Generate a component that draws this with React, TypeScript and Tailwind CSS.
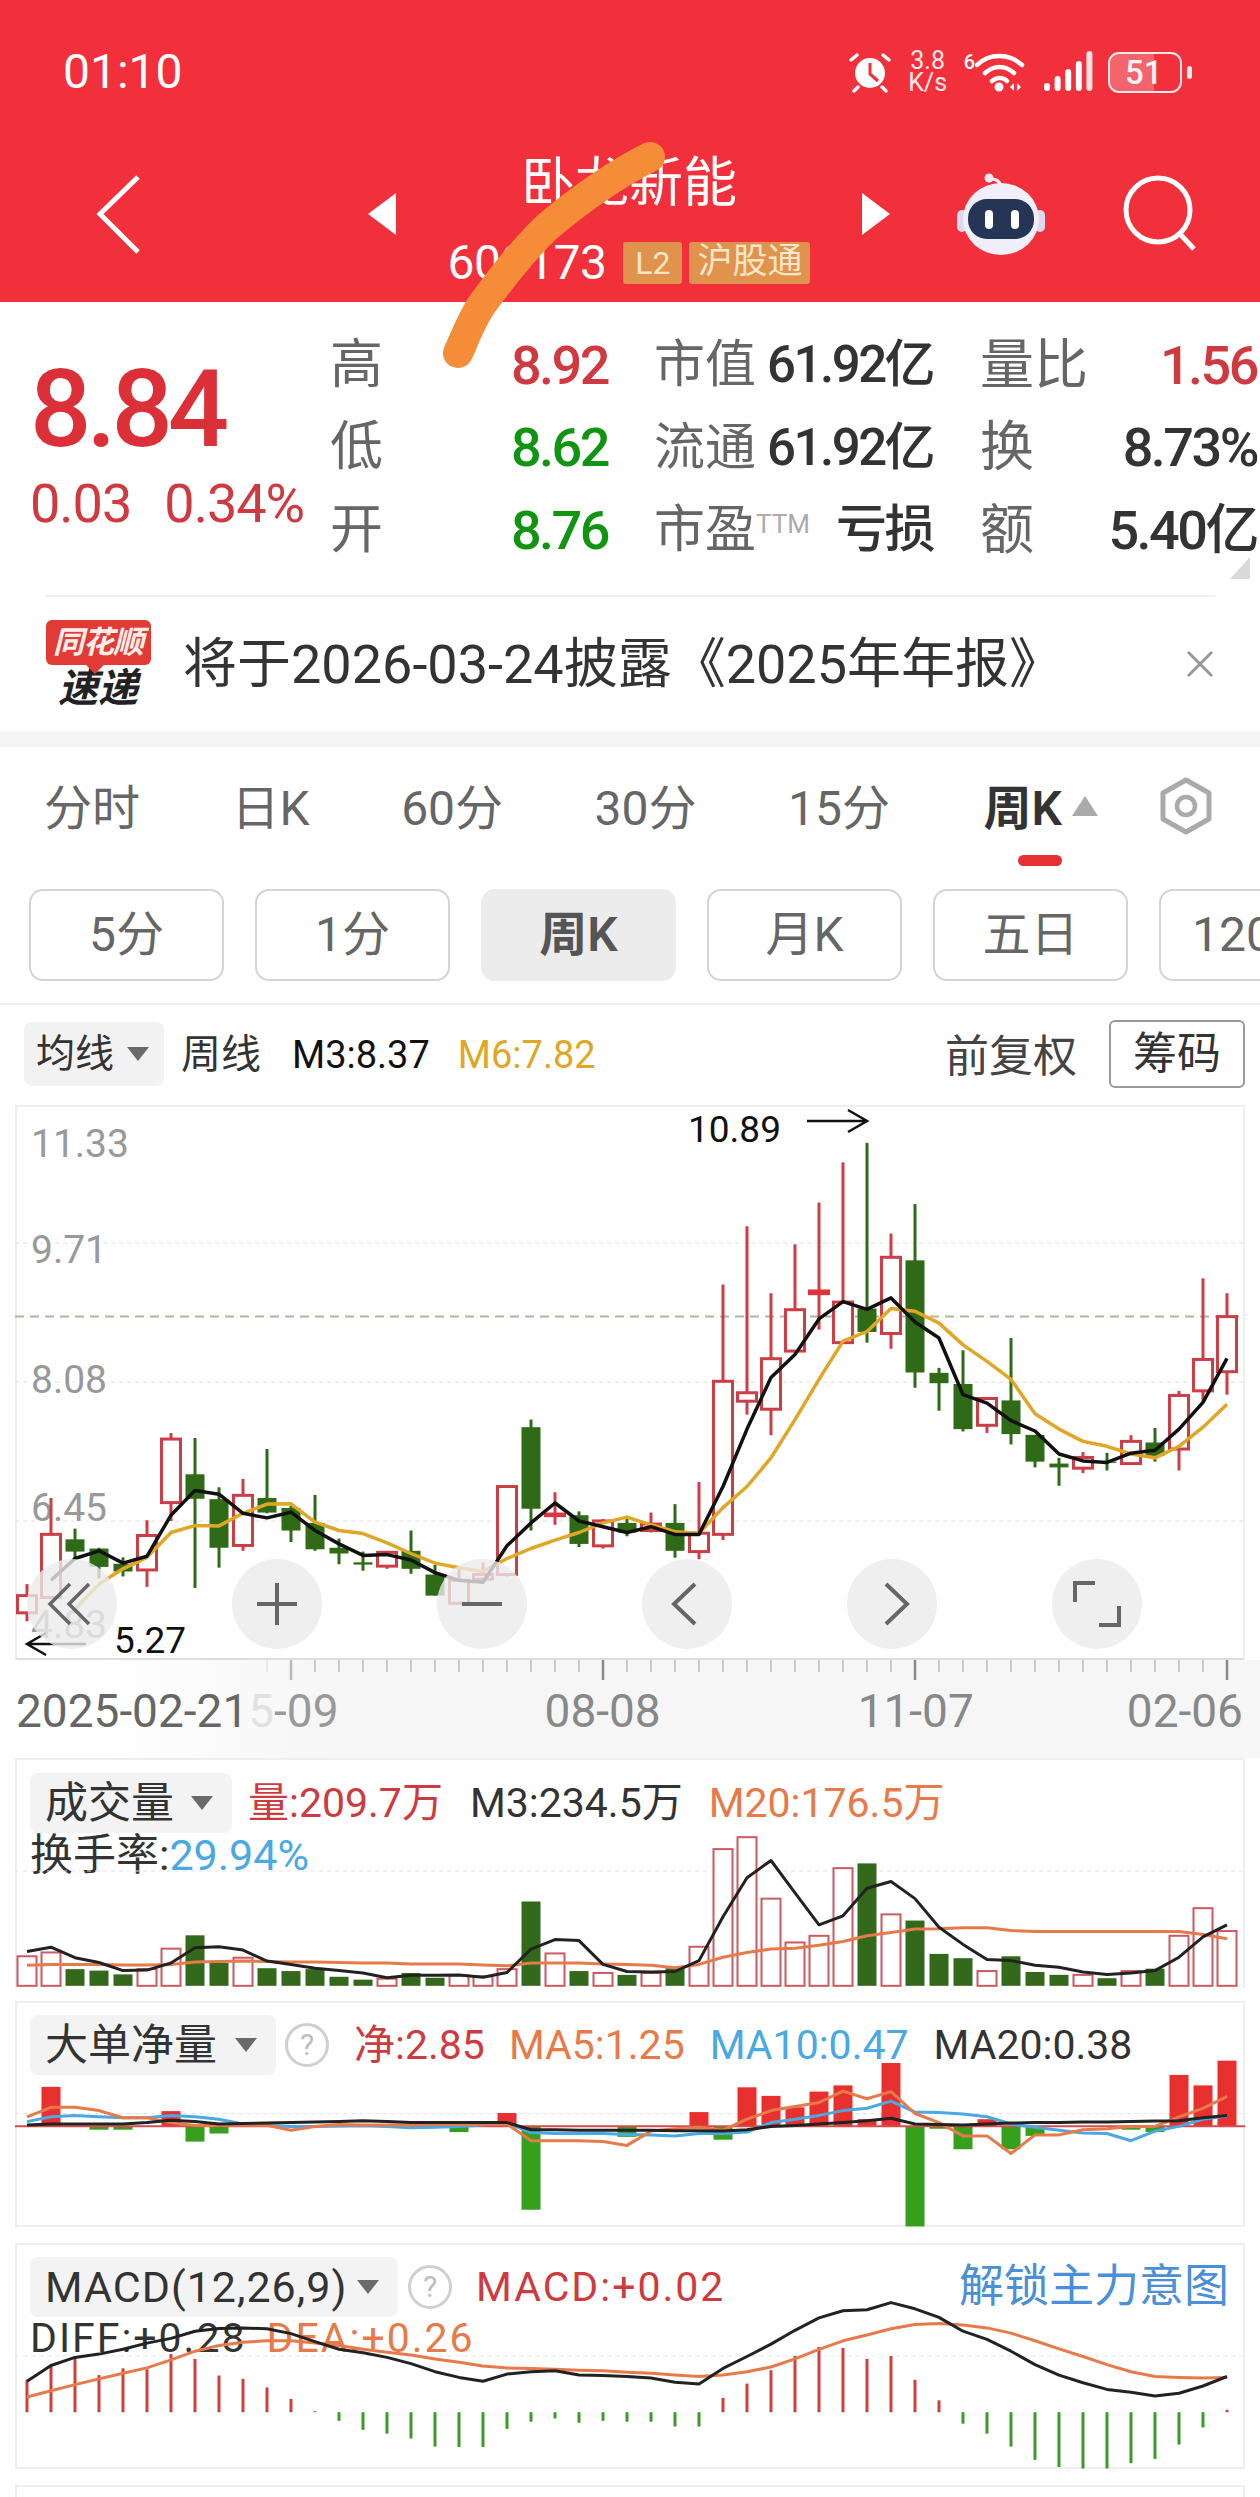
import React from 'react'

// y readings below are taken from zoomed crops, these map them back to page pixels
const mainY = (v: number) => 1100 + v / 2.613
const lowY = (v: number) => 1750 + v / 2.099
const cx = (i: number) => 27 + 24 * i

const RED = '#cc3d45'
const GREEN = '#2f6a17'

// [wick top, wick bottom, body top, body bottom, kind]
type Candle = [number, number, number, number, 'r' | 'g' | 'f']
const candles: Candle[] = [
  [1265, 1362, 1295, 1340, 'r'], [1040, 1300, 1135, 1300, 'r'], [1120, 1200, 1148, 1180, 'g'],
  [1170, 1250, 1172, 1220, 'g'], [1195, 1245, 1212, 1232, 'g'], [1098, 1272, 1138, 1228, 'r'],
  [870, 1100, 886, 1052, 'r'], [883, 1275, 978, 1042, 'g'], [1012, 1222, 1043, 1170, 'g'],
  [990, 1178, 1033, 1164, 'r'], [912, 1080, 1040, 1078, 'g'], [1060, 1155, 1066, 1125, 'g'],
  [1032, 1178, 1105, 1174, 'g'], [1146, 1213, 1170, 1185, 'g'], [1180, 1230, 1208, 1214, 'g'],
  [1178, 1225, 1182, 1218, 'r'], [1125, 1238, 1178, 1225, 'g'], [1215, 1295, 1240, 1295, 'g'],
  [1225, 1315, 1255, 1315, 'r'], [1208, 1260, 1240, 1252, 'r'], [1008, 1245, 1010, 1240, 'r'],
  [835, 1125, 855, 1068, 'g'], [1025, 1110, 1078, 1090, 'f'], [1075, 1168, 1085, 1160, 'g'],
  [1095, 1172, 1100, 1165, 'r'], [1090, 1140, 1105, 1130, 'g'], [1078, 1130, 1108, 1125, 'r'],
  [1056, 1196, 1105, 1178, 'g'], [998, 1200, 1132, 1180, 'r'], [482, 1150, 735, 1135, 'r'],
  [330, 822, 765, 787, 'r'], [505, 876, 676, 808, 'r'], [377, 660, 548, 656, 'r'],
  [268, 600, 495, 510, 'f'], [163, 636, 528, 634, 'r'], [112, 634, 545, 606, 'g'],
  [349, 650, 411, 610, 'r'], [272, 752, 419, 712, 'g'], [700, 812, 713, 740, 'g'],
  [654, 866, 742, 860, 'g'], [778, 870, 780, 850, 'r'], [622, 900, 785, 873, 'g'],
  [875, 960, 875, 945, 'g'], [935, 1008, 950, 960, 'g'], [920, 975, 934, 962, 'r'],
  [922, 968, 945, 948, 'g'], [876, 950, 892, 950, 'r'], [857, 945, 895, 930, 'g'],
  [760, 968, 772, 912, 'r'], [466, 790, 678, 760, 'r'], [505, 770, 566, 710, 'r'],
]

const priceBlack = [1255, 1198, 1178, 1210, 1192, 1085, 1020, 1030, 1080, 1092, 1077, 1125, 1160, 1190, 1188, 1202, 1235, 1255, 1260, 1165, 1105, 1053, 1100, 1115, 1130, 1115, 1135, 1135, 1010, 860, 725, 665, 572, 527, 547, 517, 580, 622, 770, 792, 838, 865, 925, 943, 947, 923, 915, 860, 790, 675]
const priceYellow = [1330, 1265, 1225, 1195, 1130, 1112, 1113, 1080, 1056, 1055, 1103, 1125, 1133, 1157, 1185, 1210, 1222, 1232, 1198, 1172, 1150, 1130, 1105, 1090, 1110, 1128, 1132, 1065, 1010, 935, 835, 730, 630, 605, 545, 552, 583, 640, 683, 730, 820, 860, 892, 905, 925, 935, 905, 855, 795]

// [top of bar, hollow red or solid green]
const volumes: [number, 'r' | 'g'][] = [
  [433, 'r'], [425, 'r'], [460, 'g'], [463, 'g'], [471, 'g'], [460, 'r'], [417, 'r'], [389, 'g'], [447, 'g'], [436, 'r'],
  [458, 'g'], [464, 'g'], [460, 'g'], [476, 'g'], [482, 'g'], [480, 'r'], [468, 'g'], [478, 'g'], [473, 'r'], [475, 'r'],
  [460, 'r'], [318, 'g'], [427, 'r'], [464, 'g'], [468, 'r'], [472, 'g'], [468, 'r'], [458, 'g'], [413, 'r'], [208, 'r'],
  [183, 'r'], [312, 'r'], [404, 'r'], [390, 'r'], [248, 'r'], [238, 'g'], [345, 'r'], [358, 'g'], [428, 'g'], [437, 'g'],
  [464, 'r'], [433, 'g'], [466, 'g'], [472, 'g'], [472, 'r'], [479, 'g'], [464, 'r'], [459, 'g'], [390, 'r'], [332, 'r'], [380, 'r'],
]
const volBlack = [423, 414, 436, 446, 463, 462, 447, 415, 413, 420, 443, 450, 458, 463, 468, 478, 473, 473, 472, 477, 467, 418, 398, 400, 450, 465, 466, 465, 442, 350, 268, 232, 300, 367, 348, 290, 276, 312, 372, 408, 440, 442, 452, 456, 466, 471, 468, 463, 435, 392, 367]
const volOrange = [452, 450, 450, 450, 451, 451, 450, 445, 444, 443, 444, 445, 445, 446, 447, 447, 449, 449, 449, 451, 453, 447, 447, 447, 449, 450, 452, 457, 450, 435, 425, 418, 416, 410, 402, 390, 383, 376, 375, 373, 373, 379, 381, 381, 381, 381, 381, 381, 381, 387, 396]

const netBars: [number, number][] = [
  [1, 707], [3, 797], [4, 797], [6, 758], [7, 822], [8, 805], [18, 802], [20, 762], [21, 965], [25, 812], [28, 760],
  [29, 818], [30, 708], [31, 726], [32, 750], [33, 717], [34, 704], [35, 775], [36, 657], [37, 1000], [38, 795],
  [39, 838], [40, 775], [41, 838], [42, 810], [46, 797], [47, 802], [48, 682], [49, 704], [50, 652],
]
const netOrange = [770, 750, 750, 757, 772, 772, 782, 788, 788, 787, 788, 798, 790, 786, 787, 787, 787, 786, 786, 786, 785, 820, 820, 820, 822, 830, 800, 795, 792, 798, 775, 757, 748, 740, 716, 732, 717, 763, 782, 810, 810, 847, 808, 808, 797, 795, 790, 790, 770, 752, 727]
const netBlue = [780, 770, 767, 770, 772, 772, 767, 770, 775, 785, 788, 790, 790, 789, 788, 790, 793, 792, 790, 787, 783, 803, 805, 805, 805, 807, 808, 810, 805, 805, 802, 782, 775, 767, 757, 752, 737, 760, 761, 764, 770, 785, 792, 798, 804, 805, 820, 800, 790, 775, 768]
const netBlack = [787, 785, 785, 785, 785, 782, 777, 780, 785, 784, 783, 782, 781, 780, 778, 780, 782, 782, 782, 782, 782, 797, 797, 798, 798, 798, 798, 799, 799, 800, 797, 790, 788, 785, 782, 778, 773, 785, 786, 787, 785, 783, 782, 782, 781, 781, 780, 779, 778, 772, 767]

const macdBars = [1322, 1290, 1278, 1312, 1298, 1300, 1268, 1278, 1313, 1320, 1338, 1362, 1388, 1408, 1427, 1435, 1445, 1462, 1463, 1463, 1425, 1410, 1403, 1412, 1408, 1410, 1410, 1420, 1420, 1360, 1330, 1302, 1272, 1253, 1255, 1278, 1272, 1322, 1365, 1414, 1435, 1462, 1490, 1505, 1508, 1508, 1497, 1488, 1458, 1422, 1385]
const macdBlack = [1325, 1292, 1275, 1268, 1258, 1245, 1235, 1220, 1214, 1213, 1215, 1225, 1242, 1258, 1265, 1275, 1288, 1305, 1317, 1325, 1310, 1305, 1303, 1312, 1313, 1315, 1318, 1327, 1331, 1298, 1273, 1247, 1218, 1192, 1177, 1175, 1160, 1173, 1191, 1220, 1237, 1262, 1290, 1312, 1328, 1342, 1348, 1356, 1350, 1335, 1315]
const macdOrange = [1358, 1345, 1332, 1320, 1308, 1297, 1280, 1262, 1250, 1243, 1240, 1240, 1245, 1250, 1258, 1264, 1270, 1278, 1285, 1293, 1297, 1298, 1300, 1302, 1303, 1306, 1308, 1312, 1315, 1312, 1305, 1295, 1278, 1258, 1240, 1228, 1215, 1206, 1204, 1207, 1213, 1224, 1240, 1257, 1273, 1290, 1305, 1315, 1317, 1318, 1317]

const line = (ys: number[], start: number, sy: (v: number) => number) =>
  ys.map((y, i) => `${cx(i + start)},${sy(y).toFixed(1)}`).join(' ')

const axisLabels = [
  { text: '11.33', y: 1157 },
  { text: '9.71', y: 1263 },
  { text: '8.08', y: 1393 },
  { text: '6.45', y: 1521 },
  { text: '4.83', y: 1638 },
]

const quoteRows = [
  { a: '高', b: '8.92', bc: 'text-[#cf3a40]', c: '市值', d: '61.92亿', e: '量比', f: '1.56', fc: 'text-[#cf3a40]' },
  { a: '低', b: '8.62', bc: 'text-[#119411]', c: '流通', d: '61.92亿', e: '换', f: '8.73%', fc: 'text-[#333]' },
  { a: '开', b: '8.76', bc: 'text-[#119411]', c: '市盈', d: '亏损', e: '额', f: '5.40亿', fc: 'text-[#333]' },
]

const tabs = ['分时', '日K', '60分', '30分', '15分']
const periods = ['5分', '1分', '周K', '月K', '五日', '120分']

function Caret() {
  return (
    <svg width="22" height="14" viewBox="0 0 22 14" className="shrink-0">
      <path d="M0 0H22L11 14Z" fill="#6a6a6a" />
    </svg>
  )
}

function Help() {
  return (
    <div className="w-[44px] h-[44px] rounded-full border-[3px] border-[#cfcfcf] flex items-center justify-center text-[30px] text-[#bdbdbd]">
      ?
    </div>
  )
}

function StatusIcons() {
  return (
    <div className="flex items-center text-white">
      <svg width="44" height="44" viewBox="0 0 44 44">
        <circle cx="22" cy="23" r="15" fill="#fff" />
        <path d="M22 13V24L30 31" fill="none" stroke="#f1303c" strokeWidth="3" />
        <path d="M3 10L9 5M41 10L35 5M10 37L6 41M34 37L38 41" stroke="#fff" strokeWidth="3.5" strokeLinecap="round" />
      </svg>
      <div className="ml-[14px] w-[44px] text-center text-white/90">
        <div className="text-[25px] leading-[22px]">3.8</div>
        <div className="text-[25px] leading-[22px]">K/s</div>
      </div>
      <span className="ml-[14px] -mt-[20px] text-[20px] font-medium">6</span>
      <svg width="50" height="44" viewBox="0 0 50 44">
        <path d="M2 15C14 3 34 3 47 15M10 23C19 15 30 15 39 23M17 31C22 27 28 27 32 31" fill="none" stroke="#fff" strokeWidth="4.5" strokeLinecap="round" />
        <circle cx="24" cy="37" r="4.5" fill="#fff" />
        <path d="M35 37L39 33V41ZM42 33L46 37L42 41Z" fill="#fff" />
      </svg>
      <svg width="50" height="42" viewBox="0 0 50 42" className="ml-[18px]">
        {[32, 25, 18, 10, 0].map((top, i) => (
          <rect key={i} x={1 + i * 10.6} y={top} width="6" height={40 - top} rx="3" fill="#fff" fillOpacity={i === 4 ? 0.85 : 1} />
        ))}
      </svg>
      <div className="relative ml-[15px] w-[74px] h-[41px] rounded-[11px] border-[2.5px] border-white/90 overflow-hidden flex items-center">
        <div className="absolute left-0 top-0 bottom-0 w-[44px] bg-white/25" />
        <span className="relative ml-[15px] text-[33px] font-medium leading-none text-white/95">51</span>
      </div>
      <div className="ml-[5px] w-[5px] h-[13px] rounded-full bg-white/90" />
    </div>
  )
}

function Robot() {
  return (
    <svg width="90" height="82" viewBox="0 0 90 82">
      <path d="M45 16C45 8 40 6 35 6" fill="none" stroke="#eee" strokeWidth="3" />
      <circle cx="33" cy="5" r="4.5" fill="#f3e9ee" />
      <rect x="1" y="37" width="10" height="22" rx="5" fill="#dcd8f0" />
      <rect x="79" y="37" width="10" height="22" rx="5" fill="#dcd8f0" />
      <ellipse cx="45" cy="46" rx="38" ry="36" fill="#f0eef8" />
      <rect x="12" y="26" width="66" height="40" rx="19" fill="#243555" />
      <rect x="29" y="37" width="8" height="19" rx="4" fill="#fff" />
      <rect x="55" y="37" width="8" height="19" rx="4" fill="#fff" />
    </svg>
  )
}

function Header() {
  return (
    <div className="h-[302px] bg-[#f1303c] text-white">
      <div className="h-[126px] pt-[18px] pl-[63px] pr-[68px] flex items-center justify-between">
        <span className="text-[48px] leading-none">01:10</span>
        <StatusIcons />
      </div>
      <div className="h-[176px] flex items-center pl-[94px]">
        <svg width="48" height="80" viewBox="0 0 48 80">
          <path d="M44 3L6 40L44 78" fill="none" stroke="#fff" strokeWidth="5" />
        </svg>
        <div className="ml-[226px] w-0 h-0 border-y-[21px] border-y-transparent border-r-[28px] border-r-white" />
        <div className="w-[466px] pt-[12px] flex flex-col items-center">
          <div className="text-[54px] leading-[60px]">卧龙新能</div>
          <div className="mt-[25px] h-[48px] flex items-center">
            <span className="text-[48px] leading-none tracking-[-0.5px]">600173</span>
            <span className="ml-[17px] w-[59px] h-[42px] rounded-[3px] bg-[#e0934c] text-[#fbe6c8] text-[32px] flex items-center justify-center">L2</span>
            <span className="ml-[7px] w-[121px] h-[42px] rounded-[3px] bg-[#e0934c] text-[#fbe6c8] text-[35px] flex items-center justify-center">沪股通</span>
          </div>
        </div>
        <div className="w-0 h-0 border-y-[21px] border-y-transparent border-l-[28px] border-l-white" />
        <div className="ml-[66px]">
          <Robot />
        </div>
        <svg width="78" height="78" viewBox="0 0 78 78" className="ml-[77px]">
          <circle cx="35" cy="35" r="32" fill="none" stroke="#fff" strokeWidth="5" />
          <path d="M57 59L71 74" fill="none" stroke="#fff" strokeWidth="5" />
        </svg>
      </div>
    </div>
  )
}

function Quote() {
  return (
    <div className="relative h-[293px] flex">
      <div className="w-[330px] pl-[30px] pt-[62px]">
        <div className="text-[108px] leading-[90px] font-medium tracking-[-5px] text-[#dc3038]">8.84</div>
        <div className="mt-[26px] flex text-[54px] leading-[48px] tracking-[-1px] text-[#cf3a40]">
          <span>0.03</span>
          <span className="ml-[33px]">0.34%</span>
        </div>
      </div>
      <div className="pt-[22px]">
        {quoteRows.map((row) => (
          <div key={row.a} className="h-[82.5px] flex items-center text-[#666]">
            <span className="w-[110px] text-[53px]">{row.a}</span>
            <span className={`w-[168px] text-right text-[54px] font-medium tracking-[-2.5px] ${row.bc}`}>{row.b}</span>
            <span className="ml-[46px] w-[113px] flex items-baseline text-[51px] whitespace-nowrap">
              {row.c}
              {row.a === '开' && <span className="text-[26px] text-[#aaa] -translate-y-[14px]">TTM</span>}
            </span>
            <span className="w-[166px] text-right text-[#333] text-[51px] font-medium tracking-[-2.5px] whitespace-nowrap">{row.d}</span>
            <span className="ml-[47px] w-[108px] text-[54px]">{row.e}</span>
            <span className={`w-[169px] text-right text-[54px] font-medium tracking-[-2.5px] whitespace-nowrap ${row.fc}`}>{row.f}</span>
          </div>
        ))}
      </div>
      <div className="absolute right-[10px] bottom-[16px] w-0 h-0 border-b-[22px] border-b-[#d9d9d9] border-l-[20px] border-l-transparent" />
    </div>
  )
}

function Notice() {
  return (
    <div className="mx-[45px] border-t-2 border-[#f0f0f0] h-[136px] flex items-center">
      <div className="w-[106px] flex flex-col items-center">
        <div className="relative w-[105px] h-[45px] rounded-[6px] bg-[#e23b36] flex items-center justify-center italic font-bold text-[31px] leading-none text-[#fdeeea] tracking-[-1px]">
          同花顺
          <div className="absolute left-[42px] -bottom-[6px] w-[14px] h-[14px] rotate-45 bg-[#e23b36]" />
        </div>
        <div className="mt-[5px] italic font-bold text-[40px] leading-[38px] text-[#222]">速递</div>
      </div>
      <div className="ml-[32px] text-[54px] text-[#333] whitespace-nowrap">将于2026-03-24披露《2025年年报》</div>
      <svg width="30" height="30" viewBox="0 0 30 30" className="ml-auto">
        <path d="M3 3L27 27M27 3L3 27" stroke="#999" strokeWidth="3" />
      </svg>
    </div>
  )
}

function Tabs() {
  return (
    <div className="h-[118px] pt-[6px] pl-[44px] pr-[45px] flex items-center text-[48px] text-[#666]">
      <div className="w-[1018px] flex items-center justify-between">
        {tabs.map((t, i) => (
          <span key={t} className={i > 0 ? '-ml-[2px]' : ''}>
            {t}
          </span>
        ))}
        <div className="relative text-[#333] font-semibold flex items-center">
          周K
          <div className="absolute -right-[36px] top-[23px] w-0 h-0 border-x-[13px] border-x-transparent border-b-[20px] border-b-[#aaa]" />
          <div className="absolute left-[34px] top-[82px] w-[44px] h-[11px] rounded-full bg-[#e63034]" />
        </div>
      </div>
      <svg width="58" height="58" viewBox="0 0 58 58" className="ml-auto -mt-[6px]">
        <path d="M29 3L52 16V42L29 55L6 42V16Z" fill="none" stroke="#aaa" strokeWidth="5" strokeLinejoin="round" />
        <circle cx="29" cy="29" r="9" fill="none" stroke="#aaa" strokeWidth="4.5" />
      </svg>
    </div>
  )
}

function Periods() {
  return (
    <div className="mt-[24px] pl-[29px] flex gap-[31px] overflow-hidden">
      {periods.map((p) => (
        <div
          key={p}
          className={
            p === '周K'
              ? 'shrink-0 w-[195px] h-[92px] rounded-[14px] bg-[#ececec] flex items-center justify-center text-[48px] font-semibold text-[#555]'
              : 'shrink-0 w-[195px] h-[92px] rounded-[14px] border-2 border-[#d4d4d4] flex items-center justify-center text-[48px] text-[#666]'
          }
        >
          {p}
        </div>
      ))}
    </div>
  )
}

function Legend() {
  return (
    <div className="h-[102px] mt-[22px] border-t-2 border-[#eee] pt-[17px] pl-[24px] pr-[15px] flex items-start">
      <div className="w-[140px] h-[64px] rounded-[8px] bg-[#f2f2f2] pl-[12px] flex items-center text-[39px] text-[#333]">
        均线
        <div className="ml-[13px]">
          <Caret />
        </div>
      </div>
      <div className="h-[66px] flex items-center text-[40px] whitespace-nowrap">
        <span className="ml-[17px] text-[#333]">周线</span>
        <span className="ml-[31px] text-[#111] text-[38px]">M3:8.37</span>
        <span className="ml-[28px] text-[#e0a626] text-[38px]">M6:7.82</span>
      </div>
      <span className="ml-auto h-[70px] flex items-center text-[44px] text-[#444]">前复权</span>
      <div className="ml-[32px] -mt-[2px] w-[136px] h-[68px] rounded-[6px] border-2 border-[#999] flex items-center justify-center text-[44px] text-[#333]">筹码</div>
    </div>
  )
}

function CircleButton({ children }: { children: React.ReactNode }) {
  return (
    <div className="w-[90px] h-[90px] rounded-full bg-[#ebebeb]/80">
      <svg width="90" height="90" viewBox="-45 -45 90 90" fill="none" stroke="#666" strokeWidth="4">
        {children}
      </svg>
    </div>
  )
}

function MainChart() {
  return (
    <div className="relative mx-[15px] h-[555px] border-2 border-[#eee] border-b-[#ddd]">
      <svg className="absolute -left-[2px] -top-[2px]" width="1230" height="555" viewBox="15 1105 1230 555">
        {[1243, 1382, 1521].map((y) => (
          <line key={y} x1="15" x2="1245" y1={y} y2={y} stroke="#ddd" strokeWidth="1" strokeDasharray="4 4" />
        ))}
        <line x1="15" x2="1245" y1="1316.6" y2="1316.6" stroke="#b4b49b" strokeWidth="2" strokeDasharray="9 6" />
        {axisLabels.map((l) => (
          <text key={l.text} x="31" y={l.y} fontSize="39" fill="#999" stroke="#fff" strokeWidth="6" paintOrder="stroke">
            {l.text}
          </text>
        ))}
        {candles.map(([t, b, bt, bb, kind], i) => {
          const x = cx(i)
          const color = kind === 'g' ? GREEN : RED
          return (
            <g key={i}>
              <line x1={x} x2={x} y1={mainY(t)} y2={mainY(b)} stroke={color} strokeWidth="3" />
              {kind === 'g' && <rect x={x - 9.5} y={mainY(bt)} width="19" height={(bb - bt) / 2.613} fill={GREEN} />}
              {kind === 'f' && <rect x={x - 11} y={mainY(bt)} width="22" height={(bb - bt) / 2.613} fill="#e0353d" />}
              {kind === 'r' && <rect x={x - 9.5} y={mainY(bt)} width="19" height={(bb - bt) / 2.613} fill="#fff" stroke={RED} strokeWidth="3" />}
            </g>
          )
        })}
        <polyline points={line(priceYellow, 2, mainY)} fill="none" stroke="#e0a626" strokeWidth="3.5" strokeLinejoin="round" />
        <polyline points={line(priceBlack, 1, mainY)} fill="none" stroke="#111" strokeWidth="3.5" strokeLinejoin="round" />
        <path d="M807 1121H866M848 1110L867 1121L848 1132" fill="none" stroke="#111" strokeWidth="2.5" />
        <text x="688" y="1142" fontSize="37" fill="#111">10.89</text>
        <path d="M86 1644H27M46 1633L27 1644L46 1655" fill="none" stroke="#111" strokeWidth="2.5" />
        <text x="114" y="1653" fontSize="37" fill="#111">5.27</text>
      </svg>
      <div className="absolute left-[10px] top-[452px] flex gap-[115px]">
        <CircleButton>
          <path d="M-2 -20L-22 0L-2 20M17 -20L-3 0L17 20" strokeWidth="3.5" />
        </CircleButton>
        <CircleButton>
          <path d="M-20 0H20M0 -21V21" />
        </CircleButton>
        <CircleButton>
          <path d="M-20 0H20" />
        </CircleButton>
        <CircleButton>
          <path d="M8 -20L-13 0L8 20" />
        </CircleButton>
        <CircleButton>
          <path d="M-6 -20L15 0L-6 20" />
        </CircleButton>
        <CircleButton>
          <path d="M-22 -2V-21H-2M2 21H22V2" />
        </CircleButton>
      </div>
    </div>
  )
}

function TimeAxis() {
  return (
    <div className="h-[98px] bg-gradient-to-r from-white from-[8%] to-[#f6f6f6] to-[26%]">
      <svg width="1260" height="22" viewBox="0 1660 1260 22" className="block">
        {candles.map((_, i) => {
          if (i < 10) return null
          const major = (i - 11) % 13 === 0
          return (
            <line
              key={i}
              x1={cx(i)}
              x2={cx(i)}
              y1="1660"
              y2={major ? 1680 : 1672}
              stroke={major ? (i === 11 ? '#bbb' : '#888') : i === 10 ? '#e5e5e5' : '#bbb'}
              strokeWidth={major ? 2.5 : 1.5}
            />
          )
        })}
      </svg>
      <div className="pl-[16px] mt-[3px] flex text-[46px] leading-[52px] text-[#888] whitespace-nowrap">
        <span className="text-[#666]">2025-02-21</span>
        <span className="text-[#e2e2e2]">5</span>
        <span className="text-[#999]">-09</span>
        <span className="ml-[206px]">08-08</span>
        <span className="ml-[197px]">11-07</span>
        <span className="ml-[153px]">02-06</span>
      </div>
    </div>
  )
}

function Chip({ label, w }: { label: string; w: string }) {
  return (
    <div className={`${w} h-[60px] shrink-0 rounded-[8px] bg-[#f3f3f3] pl-[15px] pr-[19px] flex items-center justify-between text-[43px] text-[#333] whitespace-nowrap`}>
      {label}
      <Caret />
    </div>
  )
}

function VolumePanel() {
  return (
    <div className="relative mx-[15px] h-[230px] border-2 border-b-0 border-[#eee] pl-[13px] pt-[13px]">
      <div className="flex items-center text-[41px] leading-[60px] whitespace-nowrap">
        <Chip label="成交量" w="w-[202px]" />
        <span className="ml-[16px] text-[#cf3a40]">量:209.7万</span>
        <span className="ml-[27px] text-[#333]">M3:234.5万</span>
        <span className="ml-[26px] text-[#e87a4a]">M20:176.5万</span>
      </div>
      <div className="-mt-[1px] text-[43px] leading-[46px] whitespace-nowrap text-[#333]">
        换手率:<span className="text-[#4aa8e2]">29.94%</span>
      </div>
      <svg className="absolute -left-[2px] -top-[2px]" width="1230" height="230" viewBox="15 1758 1230 230">
        <line x1="15" x2="1245" y1="1871" y2="1871" stroke="#e5e5e5" strokeDasharray="4 4" />
        {volumes.map(([top, kind], i) =>
          kind === 'g' ? (
            <rect key={i} x={cx(i) - 9.5} y={lowY(top)} width="19" height={lowY(495) - lowY(top)} fill="#33691a" />
          ) : (
            <rect key={i} x={cx(i) - 9.5} y={lowY(top)} width="19" height={lowY(495) - lowY(top)} fill="#fff" stroke="#cc5a60" strokeWidth="2" />
          ),
        )}
        <polyline points={line(volOrange, 0, lowY)} fill="none" stroke="#e87a4a" strokeWidth="3" strokeLinejoin="round" />
        <polyline points={line(volBlack, 0, lowY)} fill="none" stroke="#222" strokeWidth="3" strokeLinejoin="round" />
      </svg>
    </div>
  )
}

function NetPanel() {
  const zero = lowY(790)
  return (
    <div className="relative mx-[15px] mt-[13px] h-[226px] border-2 border-[#eee] pl-[13px] pt-[12px]">
      <div className="flex items-center text-[41px] leading-[60px] whitespace-nowrap">
        <Chip label="大单净量" w="w-[246px]" />
        <div className="ml-[9px]">
          <Help />
        </div>
        <span className="ml-[25px] text-[#cf3a40]">净:2.85</span>
        <span className="ml-[24px] text-[#e87a4a]">MA5:1.25</span>
        <span className="ml-[25px] text-[#4aa8e2]">MA10:0.47</span>
        <span className="ml-[25px] text-[#333]">MA20:0.38</span>
      </div>
      <svg className="absolute -left-[2px] -top-[2px]" width="1230" height="226" viewBox="15 2001 1230 226">
        <line x1="15" x2="1245" y1={lowY(763)} y2={lowY(763)} stroke="#e5e5e5" strokeDasharray="4 4" />
        {netBars.map(([i, end]) => {
          const y = lowY(end)
          return (
            <rect
              key={i}
              x={cx(i) - 9.5}
              y={Math.min(y, zero)}
              width="19"
              height={Math.abs(y - zero)}
              fill={end < 790 ? '#e8302f' : '#35a01c'}
            />
          )
        })}
        <line x1="15" x2="1245" y1={zero} y2={zero} stroke="#d84a4a" strokeWidth="2" />
        <polyline points={line(netBlue, 0, lowY)} fill="none" stroke="#4aa8e2" strokeWidth="3" strokeLinejoin="round" />
        <polyline points={line(netOrange, 0, lowY)} fill="none" stroke="#e87a4a" strokeWidth="3" strokeLinejoin="round" />
        <polyline points={line(netBlack, 0, lowY)} fill="none" stroke="#222" strokeWidth="3" strokeLinejoin="round" />
      </svg>
    </div>
  )
}

function MacdPanel() {
  const zero = lowY(1390)
  return (
    <div className="relative mx-[15px] mt-[16px] h-[226px] border-2 border-[#eee] pl-[13px] pt-[12px]">
      <div className="flex items-center text-[41px] leading-[60px] whitespace-nowrap">
        <div className="tracking-[1px]">
          <Chip label="MACD(12,26,9)" w="w-[368px]" />
        </div>
        <div className="ml-[10px]">
          <Help />
        </div>
        <span className="ml-[24px] text-[#cf3a40] tracking-[2px]">MACD:+0.02</span>
        <span className="ml-auto mr-[14px] text-[#4a8fd8] text-[45px]">解锁主力意图</span>
      </div>
      <div className="mt-[-2px] flex text-[41px] leading-[46px] tracking-[2px] whitespace-nowrap">
        <span className="text-[#333]">DIFF:+0.28</span>
        <span className="ml-[20px] text-[#e87a4a]">DEA:+0.26</span>
      </div>
      <svg className="absolute -left-[2px] -top-[2px]" width="1230" height="226" viewBox="15 2243 1230 226">
        <line x1="15" x2="1245" y1={lowY(1272)} y2={lowY(1272)} stroke="#e5e5e5" strokeDasharray="4 4" />
        {macdBars.map((end, i) => {
          const y = lowY(end)
          return (
            <rect
              key={i}
              x={cx(i) - 1.5}
              y={Math.min(y, zero)}
              width="3"
              height={Math.abs(y - zero)}
              fill={end < 1390 ? '#c9403f' : '#3a9a2a'}
            />
          )
        })}
        <polyline points={line(macdOrange, 0, lowY)} fill="none" stroke="#e87a4a" strokeWidth="3" strokeLinejoin="round" />
        <polyline points={line(macdBlack, 0, lowY)} fill="none" stroke="#222" strokeWidth="3" strokeLinejoin="round" />
      </svg>
    </div>
  )
}

export default function App() {
  return (
    <div className="relative w-[1260px] h-[2497px] overflow-hidden bg-white font-['Roboto','Noto_Sans_CJK_SC',sans-serif]">
      <Header />
      <Quote />
      <Notice />
      <div className="h-[16px] bg-[#f5f5f5]" />
      <Tabs />
      <Periods />
      <Legend />
      <MainChart />
      <TimeAxis />
      <VolumePanel />
      <NetPanel />
      <MacdPanel />
      <div className="mx-[15px] mt-[16px] h-[12px] border-2 border-b-0 border-[#eee]" />
      {/* pen stroke drawn on the screenshot */}
      <svg className="absolute left-0 top-0 pointer-events-none" width="1260" height="400" viewBox="0 0 1260 400">
        <path
          d="M650 157C620 172 585 195 547 227C525 248 505 273 483 303C472 318 465 338 458 353"
          fill="none"
          stroke="#f48c38"
          strokeWidth="30"
          strokeLinecap="round"
        />
      </svg>
    </div>
  )
}
